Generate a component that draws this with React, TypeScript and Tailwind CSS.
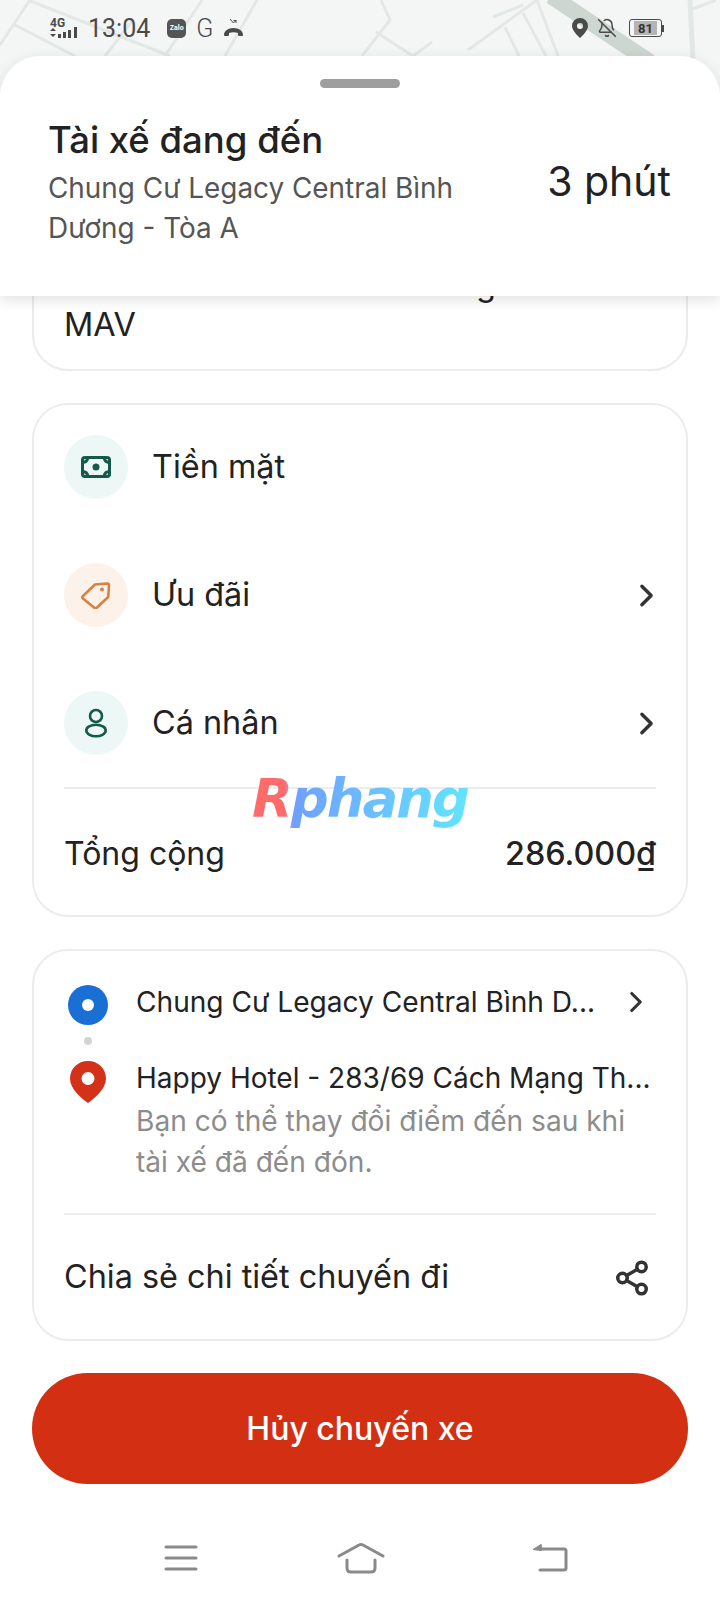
import { BellOff, ChevronRight, Share2 } from "lucide-react";

const sans = { fontFamily: "Inter, 'Noto Sans', sans-serif" };

function MapBackdrop() {
  return (
    <svg className="absolute left-0 top-0" width="720" height="90" viewBox="0 0 720 90" fill="none">
      <g stroke="#e2e8e5" strokeWidth="3">
        <path d="M0 45 30 0M15 25l60 31M28 0l142 56M105 56l28-36M202 0l-37 56M257 0l-32 56" />
        <path d="M381 0l9 20-28 36M376 32l37 24 19-14M537 0l-69 50M493 17l30-12M505 27l14 29M523 13l23 43M537 0l21 56M690 10l26-10" />
        <path d="M690 0l3 60" strokeWidth="5" />
      </g>
      <path d="M551-4 650 62" stroke="#cdd6d1" strokeWidth="16" />
    </svg>
  );
}

function StatusBar() {
  return (
    <div className="absolute left-0 top-0 flex h-[56px] w-[720px] items-center justify-between pl-[50px] pr-[56px] text-[#4a4a4a]" style={{ fontFamily: "Roboto, sans-serif" }}>
      <div className="flex items-center">
        <div className="relative h-[22px] w-[32px]">
          <span className="absolute left-0 top-[-3px] text-[12px] font-bold">4G</span>
          <svg className="absolute bottom-0 left-0" width="32" height="14" viewBox="0 0 32 14" fill="#4a4a4a">
            <path d="M0 6l3-3 3 3zM0 9h6l-3 3z" />
            <rect x="8" y="9" width="3" height="4" />
            <rect x="13" y="7" width="3" height="6" />
            <rect x="18" y="5" width="3" height="8" />
            <rect x="24" y="2" width="3" height="11" />
          </svg>
        </div>
        <span className="ml-[6px] text-[25px] leading-none">13:04</span>
        <div className="ml-[17px] flex h-[19px] w-[19px] items-center justify-center rounded-[5px] bg-[#555] text-[7px] font-bold text-white">Zalo</div>
        <span className="ml-[10px] text-[25px] font-light leading-none">G</span>
        <svg className="ml-[10px]" width="21" height="20" viewBox="0 0 21 20" fill="none">
          <path d="M1 17c0-4 4-7 9.500-7S20 13 20 17c0 1-1 1-2 1h-2c-1 0-1-1-1-2v-1c-3-1-6-1-9 0v1c0 1 0 2-1 2H3c-1 0-2 0-2-1z" fill="#4a4a4a" />
          <path d="M7 1l3.500 4L13 2.500M13 2.500h-2.500M13 2.500V5" stroke="#4a4a4a" strokeWidth="1" />
        </svg>
      </div>
      <div className="flex items-center">
        <svg width="16" height="20" viewBox="0 0 16 20">
          <path fillRule="evenodd" fill="#4a4a4a" d="M8 0a8 8 0 0 1 8 8c0 5-8 12-8 12S0 13 0 8a8 8 0 0 1 8-8zm0 5a3 3 0 1 0 0 6 3 3 0 0 0 0-6z" />
        </svg>
        <BellOff className="ml-[9px] size-[20px]" strokeWidth={1.8} />
        <div className="ml-[12px] flex h-[18px] w-[33px] items-center justify-center rounded-[3px] border border-[#4a4a4a] p-[1px]">
          <div className="flex h-full w-[80%] items-center justify-center self-start bg-[#b4b4b4] text-[13px] font-bold leading-none text-[#333]">81</div>
        </div>
        <div className="h-[7px] w-[2px] bg-[#4a4a4a]" />
      </div>
    </div>
  );
}

function OptionRow({ bg, icon, label, arrow }: { bg: string; icon: React.ReactNode; label: string; arrow?: boolean }) {
  return (
    <div className="flex h-[64px] items-center">
      <div className={`flex size-[64px] items-center justify-center rounded-full ${bg}`}>{icon}</div>
      <span className="ml-[24px] flex-1 text-[32.4px] text-[#222]">{label}</span>
      {arrow && <ChevronRight className="mr-[-9px] size-[37px] text-[#333]" strokeWidth={2.2} />}
    </div>
  );
}

export default function App() {
  return (
    <div className="relative h-[1600px] w-[720px] overflow-hidden bg-white" style={sans}>
      <div className="absolute left-0 top-0 h-[90px] w-[720px] bg-[#f4f6f5]" />
      <MapBackdrop />
      <StatusBar />

      <div className="flex h-[1600px] flex-col px-[32px] pt-[250px]">
        <div className="flex h-[121px] flex-col justify-end rounded-b-[36px] border-2 border-[#ececec] bg-white px-[30px] pb-[24px] text-[32.4px] leading-[40px] text-[#222]">
          <span className="pl-[412px]">g</span>
          <span>MAV</span>
        </div>

        <div className="mt-[32px] rounded-[36px] border-2 border-[#ececec] px-[30px] pb-[37px] pt-[30px]">
          <div className="flex flex-col gap-[64px]">
            <OptionRow
              bg="bg-[#edf8f6]"
              label="Tiền mặt"
              icon={
                <svg width="30" height="22" viewBox="0 0 30 22" fill="none" stroke="#14594a" strokeWidth="3">
                  <rect x="1.500" y="1.500" width="27" height="19" rx="2.500" />
                  <circle cx="15" cy="11" r="3.500" fill="#14594a" stroke="none" />
                  <path d="M1.500 6.500c3 0 5-2 5.500-5M28.500 6.500c-3 0-5-2-5.500-5M1.500 15.500c3 0 5 2 5.500 5M28.500 15.500c-3 0-5 2-5.500 5" />
                </svg>
              }
            />
            <OptionRow
              bg="bg-[#fdf2ea]"
              label="Ưu đãi"
              arrow
              icon={
                <svg width="30" height="28" viewBox="0 0 30 28" fill="none" stroke="#d9823f" strokeWidth="2.600" strokeLinejoin="round">
                  <path d="M2 15 14 3.500 26 2.500c1.500 0 2 1 2 2l-.8 11.500L16 26.500c-1 1-2 1-3 0L2 17.500c-.8-.8-.8-1.700 0-2.500z" />
                  <circle cx="21" cy="8.500" r="2" fill="#d9823f" stroke="none" />
                </svg>
              }
            />
            <OptionRow
              bg="bg-[#edf8f6]"
              label="Cá nhân"
              arrow
              icon={
                <svg width="24" height="30" viewBox="0 0 24 30" fill="none" stroke="#14594a" strokeWidth="2.600">
                  <circle cx="12" cy="8" r="6" />
                  <ellipse cx="12" cy="22.500" rx="9.700" ry="5.800" />
                </svg>
              }
            />
          </div>
          <div className="mt-[32px] h-[2px] bg-[#ececec]" />
          <div className="mt-[41px] flex items-center justify-between text-[#222]">
            <span className="text-[32px]">Tổng cộng</span>
            <span className="text-[32.3px] font-medium">286.000₫</span>
          </div>
        </div>

        <div className="mt-[32px] rounded-[36px] border-2 border-[#ececec] px-[30px] pb-[37px] pt-[34px]">
          <div className="flex">
            <div className="flex w-[72px] shrink-0 flex-col items-center pr-[24px]">
              <div className="flex size-[40px] items-center justify-center rounded-full bg-[#1a6fd4]">
                <div className="size-[12px] rounded-full bg-white" />
              </div>
              <div className="mt-[12px] size-[8px] rounded-full bg-[#d4d4d4]" />
              <svg className="mt-[16px]" width="36" height="42" viewBox="0 0 36 42">
                <path fillRule="evenodd" fill="#d43119" d="M18 0c10 0 18 7.500 18 17.500C36 28 25 37 18 42 11 37 0 28 0 17.500 0 7.500 8 0 18 0zm0 11a6.500 6.500 0 1 0 0 13 6.500 6.500 0 0 0 0-13z" />
              </svg>
            </div>
            <div className="min-w-0 flex-1">
              <div className="mt-[-3px] flex h-[40px] items-center justify-between">
                <span className="text-[28.100px] text-[#222]">Chung Cư Legacy Central Bình D...</span>
                <ChevronRight className="mr-[3px] size-[34px] text-[#333]" strokeWidth={2.2} />
              </div>
              <div className="mt-[38px] whitespace-nowrap text-[28px] leading-[36px] text-[#222]">Happy Hotel - 283/69 Cách Mạng Th...</div>
              <div className="mt-[5px] text-[28.100px] leading-[41px] text-[#8c8c8c]">Bạn có thể thay đổi điểm đến sau khi tài xế đã đến đón.</div>
            </div>
          </div>
          <div className="mt-[30px] h-[2px] bg-[#ececec]" />
          <div className="mt-[38px] flex items-center justify-between">
            <span className="text-[32.4px] text-[#222]">Chia sẻ chi tiết chuyến đi</span>
            <Share2 className="mr-[5px] size-[38px] text-[#333]" strokeWidth={2.2} />
          </div>
        </div>

        <button type="button" className="mt-[32px] flex h-[111px] shrink-0 items-center justify-center rounded-full bg-[#d32f12] text-[32px] font-medium text-white">Hủy chuyến xe</button>

        <div className="mt-[58px] flex items-center pl-[132px]">
          <svg width="34" height="28" viewBox="0 0 34 28" fill="none" stroke="#8a8a8a" strokeWidth="3" strokeLinecap="round">
            <path d="M2 3h30M2 14h30M2 25h30" />
          </svg>
          <svg className="ml-[139px]" width="48" height="32" viewBox="0 0 48 32" fill="none" stroke="#8a8a8a" strokeWidth="3" strokeLinecap="round" strokeLinejoin="round">
            <path d="M2 14 22 3q2-1 4 0l20 11M10 18v8q0 4 4 4h20q4 0 4-4v-8" />
          </svg>
          <svg className="ml-[147px]" width="36" height="30" viewBox="0 0 36 30" fill="none" stroke="#8a8a8a" strokeWidth="3" strokeLinecap="round" strokeLinejoin="round">
            <path d="M8 6h24q2 0 2 2v17q0 2-2 2H8" />
            <path d="M9 1.500 1 6.500l8 1z" fill="#8a8a8a" strokeWidth="1" />
          </svg>
        </div>
      </div>

      <div className="absolute left-[252px] top-[767px] bg-gradient-to-r from-[#ff6b6b] from-[15%] via-[#6f9fff] via-[19%] to-[#62e4ff] bg-clip-text text-[53px] font-bold italic leading-[64px] text-transparent" style={{ fontFamily: "'DejaVu Sans', sans-serif", letterSpacing: "-2px" }}>Rphang</div>

      <div className="absolute left-0 top-[56px] h-[240px] w-[720px] rounded-t-[40px] bg-white shadow-[0_4px_14px_rgba(0,0,0,0.12)]">
        <div className="mx-auto mt-[23px] h-[9px] w-[80px] rounded-full bg-[#9e9e9e]" />
        <div className="mt-[27px] flex items-center justify-between pl-[48px] pr-[49px]">
          <div className="w-[430px]">
            <h1 className="text-[36.500px] font-medium leading-[50px] text-[#222]">Tài xế đang đến</h1>
            <p className="mt-[3px] text-[27.900px] leading-[40px] text-[#555]">Chung Cư Legacy Central Bình Dương - Tòa A</p>
          </div>
          <span className="text-[41px] text-[#222]">3 phút</span>
        </div>
      </div>
    </div>
  );
}
